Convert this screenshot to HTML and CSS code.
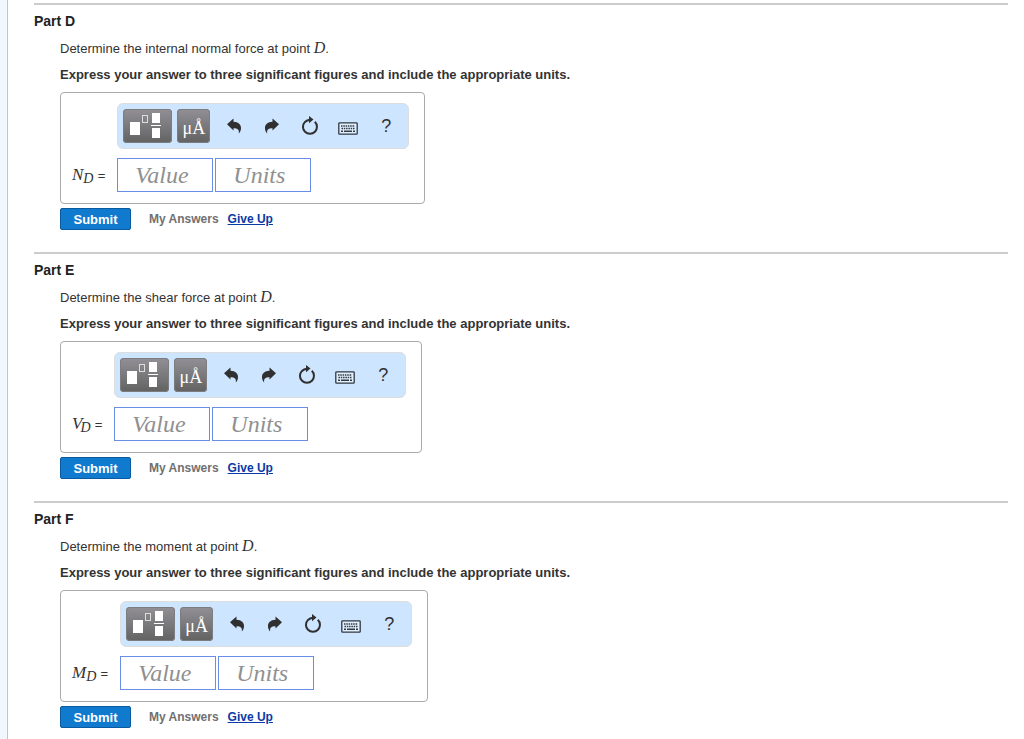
FILE: index.html
```html
<!DOCTYPE html>
<html lang="en">
<head>
<meta charset="utf-8">
<title>Internal forces at point D</title>
<link rel="stylesheet" href="styles.css">
</head>
<body>
<svg class="symbols" aria-hidden="true">
  <symbol id="template" viewBox="0 0 49 34">
    <rect x="7" y="13" width="10" height="13" fill="#fff"/>
    <rect x="19.500" y="6.500" width="5" height="7" fill="none" stroke="#ddd"/>
    <rect x="29" y="4" width="8" height="10" fill="#fff"/>
    <rect x="28" y="16" width="10" height="1" fill="#fff"/>
    <rect x="29" y="19" width="8" height="10" fill="#fff"/>
  </symbol>
  <symbol id="undo" viewBox="0 0 16 16">
    <path d="M1 6.200 7.500.5v3.300c5 .2 7.700 3 7.500 6.600-.1 2-.9 3.600-2.200 5.100.7-3.300-1-5.200-5.300-5.200v2.200z" fill="#303030"/>
  </symbol>
  <symbol id="reset" viewBox="0 0 18 20">
    <path d="M13.800 5.800A7 7 0 1 1 4 5.900Q5.800 4.200 9 3.800" fill="none" stroke="#303030" stroke-width="2"/>
    <path d="M8 0l4.500 3.600L8 7.200z" fill="#303030"/>
  </symbol>
  <symbol id="keyboard" viewBox="0 0 20 13">
    <rect x=".8" y=".8" width="18.400" height="11.400" rx=".8" fill="#e1f0ff" stroke="#303840" stroke-width="1.300"/>
    <path d="M3 4h14M3.500 6.500h13" stroke="#303840" stroke-width="1.400" stroke-dasharray="1.500 .8"/>
    <path d="M3 9.300h2M6 9.300h8M15 9.300h2" stroke="#303840" stroke-width="1.400"/>
  </symbol>
</svg>
<main class="page">
  <section class="part">
    <h2 class="title">Part D</h2>
    <div class="body">
      <p class="question">Determine the internal normal force at point <i class="point">D</i>.</p>
      <p class="hint">Express your answer to three significant figures and include the appropriate units.</p>
      <form class="answer">
        <div class="toolbar">
          <button type="button" class="key wide" aria-label="Templates"><svg width="49" height="34"><use href="#template"/></svg></button>
          <button type="button" class="key">μÅ</button>
          <button type="button" class="tool" aria-label="Undo"><svg width="16" height="16"><use href="#undo"/></svg></button>
          <button type="button" class="tool" aria-label="Redo"><svg class="flip" width="16" height="16"><use href="#undo"/></svg></button>
          <button type="button" class="tool" aria-label="Reset"><svg width="18" height="20"><use href="#reset"/></svg></button>
          <button type="button" class="tool low" aria-label="Keyboard"><svg width="20" height="13"><use href="#keyboard"/></svg></button>
          <button type="button" class="tool">?</button>
        </div>
        <label class="symbol" for="value-d"><i>N<sub>D</sub></i> <span class="equals">=</span></label>
        <div class="fields">
          <input class="field" id="value-d" type="text" placeholder="Value">
          <input class="field" type="text" placeholder="Units" aria-label="Units">
        </div>
      </form>
      <div class="actions">
        <button type="button" class="submit">Submit</button>
        <span class="mine">My Answers</span>
        <a class="give" href="#">Give Up</a>
      </div>
    </div>
  </section>
  <section class="part">
    <h2 class="title">Part E</h2>
    <div class="body">
      <p class="question">Determine the shear force at point <i class="point">D</i>.</p>
      <p class="hint">Express your answer to three significant figures and include the appropriate units.</p>
      <form class="answer">
        <div class="toolbar">
          <button type="button" class="key wide" aria-label="Templates"><svg width="49" height="34"><use href="#template"/></svg></button>
          <button type="button" class="key">μÅ</button>
          <button type="button" class="tool" aria-label="Undo"><svg width="16" height="16"><use href="#undo"/></svg></button>
          <button type="button" class="tool" aria-label="Redo"><svg class="flip" width="16" height="16"><use href="#undo"/></svg></button>
          <button type="button" class="tool" aria-label="Reset"><svg width="18" height="20"><use href="#reset"/></svg></button>
          <button type="button" class="tool low" aria-label="Keyboard"><svg width="20" height="13"><use href="#keyboard"/></svg></button>
          <button type="button" class="tool">?</button>
        </div>
        <label class="symbol" for="value-e"><i>V<sub class="tucked">D</sub></i> <span class="equals">=</span></label>
        <div class="fields">
          <input class="field" id="value-e" type="text" placeholder="Value">
          <input class="field" type="text" placeholder="Units" aria-label="Units">
        </div>
      </form>
      <div class="actions">
        <button type="button" class="submit">Submit</button>
        <span class="mine">My Answers</span>
        <a class="give" href="#">Give Up</a>
      </div>
    </div>
  </section>
  <section class="part">
    <h2 class="title">Part F</h2>
    <div class="body">
      <p class="question">Determine the moment at point <i class="point">D</i>.</p>
      <p class="hint">Express your answer to three significant figures and include the appropriate units.</p>
      <form class="answer">
        <div class="toolbar">
          <button type="button" class="key wide" aria-label="Templates"><svg width="49" height="34"><use href="#template"/></svg></button>
          <button type="button" class="key">μÅ</button>
          <button type="button" class="tool" aria-label="Undo"><svg width="16" height="16"><use href="#undo"/></svg></button>
          <button type="button" class="tool" aria-label="Redo"><svg class="flip" width="16" height="16"><use href="#undo"/></svg></button>
          <button type="button" class="tool" aria-label="Reset"><svg width="18" height="20"><use href="#reset"/></svg></button>
          <button type="button" class="tool low" aria-label="Keyboard"><svg width="20" height="13"><use href="#keyboard"/></svg></button>
          <button type="button" class="tool">?</button>
        </div>
        <label class="symbol" for="value-f"><i>M<sub>D</sub></i> <span class="equals">=</span></label>
        <div class="fields">
          <input class="field" id="value-f" type="text" placeholder="Value">
          <input class="field" type="text" placeholder="Units" aria-label="Units">
        </div>
      </form>
      <div class="actions">
        <button type="button" class="submit">Submit</button>
        <span class="mine">My Answers</span>
        <a class="give" href="#">Give Up</a>
      </div>
    </div>
  </section>
</main>
</body>
</html>
```
FILE: styles.css
```css
* { box-sizing: border-box; }

body {
  margin: 0;
  background: #f1f7ff;
  font-family: "Liberation Sans", Arial, sans-serif;
  font-size: 13px;
  color: #333;
}

.symbols { display: none; }

.page {
  min-height: 100vh;
  margin-left: 7px;
  padding: 3px 16px 0 26px;
  border-left: 1px solid #b4c8dc;
  background: #fff;
}

.part {
  border-top: 2px solid #ccc;
  padding-bottom: 22px;
}

.part:last-child { padding-bottom: 8px; }

.title {
  margin: 0;
  padding: 8px 0 10px;
  font-size: 14px;
  line-height: 16px;
  color: #222;
}

.body { padding-left: 26px; }

.question,
.hint {
  margin: 0;
  line-height: 20px;
}

.question { margin-bottom: 6px; }

.hint {
  margin-bottom: 7px;
  font-weight: bold;
}

.point {
  font-family: "Liberation Serif", serif;
  font-size: 16px;
  line-height: 16px;
}

.answer {
  display: grid;
  grid-template-columns: auto auto;
  width: max-content;
  gap: 9px 12px;
  padding: 10px 15px 11px 11px;
  border: 1px solid #aaa;
  border-radius: 4px;
}

.toolbar {
  grid-column: 2;
  display: flex;
  align-items: center;
  width: 292px;
  height: 46px;
  padding: 0 5px;
  border: 1px solid #ddd;
  border-radius: 6px;
  background: #cee5ff;
}

.key,
.tool {
  display: flex;
  flex: none;
  align-items: center;
  justify-content: center;
  padding: 0;
  border: 0;
}

.key {
  width: 33px;
  height: 34px;
  margin-right: 5px;
  padding-top: 4px;
  border-radius: 4px;
  background: linear-gradient(#929096, #626262);
  box-shadow: inset 0 0 0 1px #7d7d80;
  color: #fff;
  font-family: "Liberation Serif", serif;
  font-size: 18px;
}

.wide {
  width: 49px;
  padding-top: 0;
}

.tool {
  width: 38px;
  height: 34px;
  background: none;
  color: #303030;
  font-family: "Liberation Sans", Arial, sans-serif;
  font-size: 18px;
}

.low { padding-top: 4px; }

.flip { transform: scaleX(-1); }

.symbol {
  align-self: center;
  font-family: "Liberation Serif", serif;
  font-size: 17px;
  line-height: 22px;
  white-space: nowrap;
}

.symbol sub {
  font-size: 14px;
  line-height: 1;
  vertical-align: -3px;
}

.symbol .tucked { margin-left: -2px; }

.equals {
  font-family: "Liberation Sans", Arial, sans-serif;
  font-size: 13px;
}

.fields {
  display: flex;
  gap: 2px;
}

.field {
  width: 96px;
  height: 34px;
  padding: 0 17px;
  border: 1px solid #6a8ee8;
  border-radius: 0;
  background: #fff;
  font-family: "Liberation Serif", serif;
  font-size: 24px;
  font-style: italic;
}

.field::placeholder { color: #909090; opacity: 1; }

.actions {
  display: flex;
  align-items: center;
  padding-top: 4px;
}

.submit {
  width: 71px;
  height: 22px;
  margin-right: 18px;
  padding: 0;
  border: 1px solid #095a9f;
  border-radius: 2px;
  background: #107ace;
  color: #fff;
  font-family: "Liberation Sans", Arial, sans-serif;
  font-size: 13px;
  font-weight: bold;
}

.mine,
.give {
  font-size: 12px;
  font-weight: bold;
}

.mine {
  margin-right: 9px;
  color: #707070;
}

.give { color: #0a3aa5; }
```
